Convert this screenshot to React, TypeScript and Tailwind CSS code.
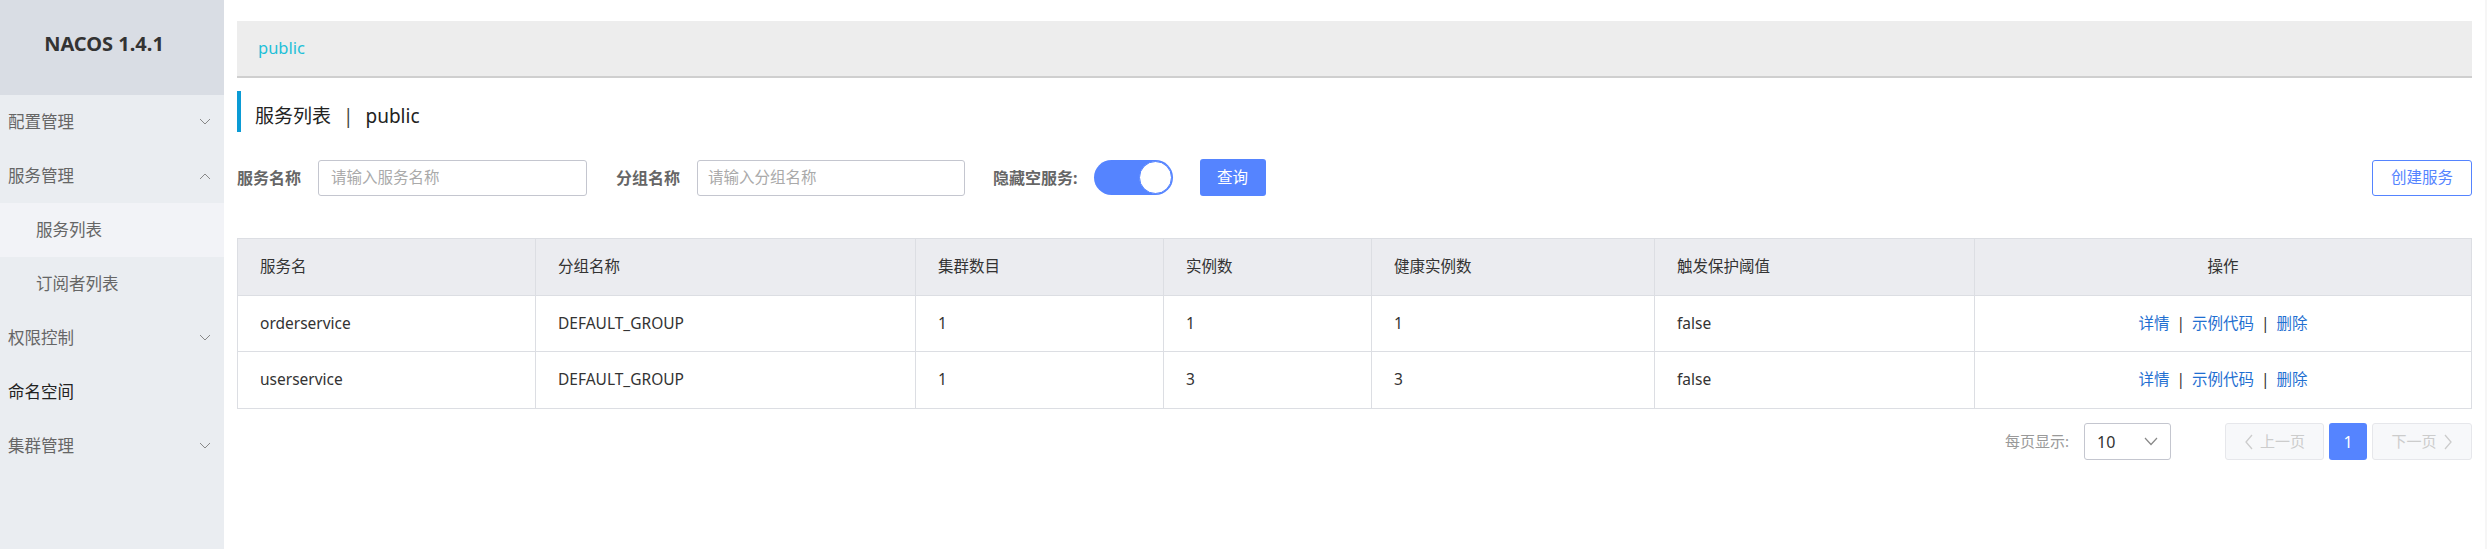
import React from "react";

const Chevron = ({ up = false }: { up?: boolean }) => (
  <svg width="12" height="8" viewBox="0 0 12 8" className="text-[#888]">
    <path
      d={up ? "M1 7 L6 2 L11 7" : "M1 1 L6 6 L11 1"}
      fill="none"
      stroke="currentColor"
      strokeWidth="1"
    />
  </svg>
);

const menu = [
  { label: "配置管理", arrow: "down" },
  { label: "服务管理", arrow: "up" },
  { label: "服务列表", sub: true, active: true },
  { label: "订阅者列表", sub: true },
  { label: "权限控制", arrow: "down" },
  { label: "命名空间", dark: true },
  { label: "集群管理", arrow: "down" },
];

const rows = [
  { name: "orderservice", group: "DEFAULT_GROUP", clusters: 1, instances: 1, healthy: 1, threshold: "false" },
  { name: "userservice", group: "DEFAULT_GROUP", clusters: 1, instances: 3, healthy: 3, threshold: "false" },
];

function Sidebar() {
  return (
    <aside className="w-[224px] shrink-0 bg-[#eaedf1] min-h-screen">
      <div className="h-[95px] bg-[#d9dde4] flex items-center justify-center pr-[16px] pb-[8px]">
        <span className="text-[20px] font-bold text-[#333]">NACOS 1.4.1</span>
      </div>
      {menu.map((m) => (
        <div
          key={m.label}
          className={`h-[54px] flex items-center justify-between pr-[13px] text-[16.5px] ${
            m.sub ? "pl-[36px]" : "pl-[8px]"
          } ${m.active ? "bg-[#f2f3f7]" : ""} ${m.dark ? "text-[#222]" : "text-[#666]"}`}
        >
          <span>{m.label}</span>
          {m.arrow && <Chevron up={m.arrow === "up"} />}
        </div>
      ))}
    </aside>
  );
}

function Filters() {
  return (
    <div className="flex items-center mt-[27px] h-[37px]">
      <span className="text-[16px] font-bold text-[#666]">服务名称</span>
      <div className="ml-[17px] w-[269px] h-[36px] border border-[#c4c6cf] rounded-[3px] flex items-center px-[12px] text-[15.5px] text-[#aaa]">
        请输入服务名称
      </div>
      <span className="ml-[29px] text-[16px] font-bold text-[#666]">分组名称</span>
      <div className="ml-[17px] w-[268px] h-[36px] border border-[#c4c6cf] rounded-[3px] flex items-center px-[10px] text-[15.5px] text-[#aaa]">
        请输入分组名称
      </div>
      <span className="ml-[28px] text-[16px] font-bold text-[#666]">隐藏空服务:</span>
      <div className="ml-[16px] w-[79px] h-[35px] rounded-full bg-[#5584ff] flex items-center justify-end pr-[1px]">
        <div className="w-[33px] h-[33px] rounded-full bg-white border border-[#5584ff]" />
      </div>
      <button className="ml-[27px] w-[66px] h-[37px] rounded-[3px] bg-[#5584ff] text-white text-[15.5px]">
        查询
      </button>
      <div className="flex-1" />
      <button className="w-[100px] h-[36px] rounded-[3px] border border-[#5584ff] text-[#5584ff] text-[15.5px]">
        创建服务
      </button>
    </div>
  );
}

function ServiceTable() {
  const th = "border border-[#dcdee3] px-[22px] font-normal text-left text-[#333]";
  const td = "border border-[#dcdee3] px-[22px] text-[#333]";
  return (
    <table className="w-full table-fixed border-collapse mt-[42px] text-[15.5px]">
      <colgroup>
        <col className="w-[298px]" />
        <col className="w-[380px]" />
        <col className="w-[248px]" />
        <col className="w-[208px]" />
        <col className="w-[283px]" />
        <col className="w-[320px]" />
        <col className="w-[497px]" />
      </colgroup>
      <thead>
        <tr className="h-[57px] bg-[#ebecf0]">
          <th className={th}>服务名</th>
          <th className={th}>分组名称</th>
          <th className={th}>集群数目</th>
          <th className={th}>实例数</th>
          <th className={th}>健康实例数</th>
          <th className={th}>触发保护阈值</th>
          <th className={`${th} !text-center`}>操作</th>
        </tr>
      </thead>
      <tbody>
        {rows.map((r, i) => (
          <tr key={r.name} className={i === 0 ? "h-[56px]" : "h-[57px]"}>
            <td className={td}>{r.name}</td>
            <td className={td}>{r.group}</td>
            <td className={td}>{r.clusters}</td>
            <td className={td}>{r.instances}</td>
            <td className={td}>{r.healthy}</td>
            <td className={td}>{r.threshold}</td>
            <td className={`${td} text-center`}>
              <span className="text-[#1f6fd1]">详情</span>
              <span className="mx-[7px] text-[#333]">|</span>
              <span className="text-[#1f6fd1]">示例代码</span>
              <span className="mx-[7px] text-[#333]">|</span>
              <span className="text-[#1f6fd1]">删除</span>
            </td>
          </tr>
        ))}
      </tbody>
    </table>
  );
}

function Pagination() {
  return (
    <div className="flex items-center justify-end mt-[14px] h-[37px]">
      <span className="text-[15px] text-[#999]">每页显示:</span>
      <div className="ml-[15px] w-[87px] h-[37px] border border-[#c4c6cf] rounded-[3px] flex items-center justify-between pl-[12px] pr-[12px]">
        <span className="text-[16px] text-[#333]">10</span>
        <svg width="14" height="9" viewBox="0 0 14 9">
          <path d="M1 1 L7 7.5 L13 1" fill="none" stroke="#888" strokeWidth="1.2" />
        </svg>
      </div>
      <div className="ml-[54px] w-[99px] h-[37px] border border-[#e6e7eb] bg-[#f7f8fa] rounded-[3px] flex items-center justify-center gap-[6px] text-[15px] text-[#ccc]">
        <svg width="10" height="16" viewBox="0 0 10 16">
          <path d="M8 1 L2 8 L8 15" fill="none" stroke="#ccc" strokeWidth="1.3" />
        </svg>
        上一页
      </div>
      <div className="ml-[5px] w-[38px] h-[37px] rounded-[3px] bg-[#5584ff] text-white text-[16px] flex items-center justify-center">
        1
      </div>
      <div className="ml-[5px] w-[100px] h-[37px] border border-[#e6e7eb] bg-[#f7f8fa] rounded-[3px] flex items-center justify-center gap-[6px] text-[15px] text-[#ccc]">
        下一页
        <svg width="10" height="16" viewBox="0 0 10 16">
          <path d="M2 1 L8 8 L2 15" fill="none" stroke="#ccc" strokeWidth="1.3" />
        </svg>
      </div>
    </div>
  );
}

export default function App() {
  return (
    <div className="flex min-h-screen bg-white font-['Noto_Sans','Noto_Sans_CJK_SC',sans-serif]">
      <Sidebar />
      <main className="flex-1 px-[13px] pt-[21px]">
        <div className="h-[57px] bg-[#ededed] border-b-2 border-[#cfcfcf] flex items-center pl-[21px]">
          <span className="text-[16.5px] text-[#1ec0d8]">public</span>
        </div>
        <div className="mt-[13px] h-[41px] border-l-4 border-[#0b9bd5] flex items-center pt-[9px] pl-[14px] text-[19px] text-[#222]">
          <span>服务列表</span>
          <span className="mx-[12px] text-[#444]">|</span>
          <span>public</span>
        </div>
        <Filters />
        <ServiceTable />
        <Pagination />
      </main>
      <div className="w-[3px] bg-[#f6f6f6]" />
    </div>
  );
}
